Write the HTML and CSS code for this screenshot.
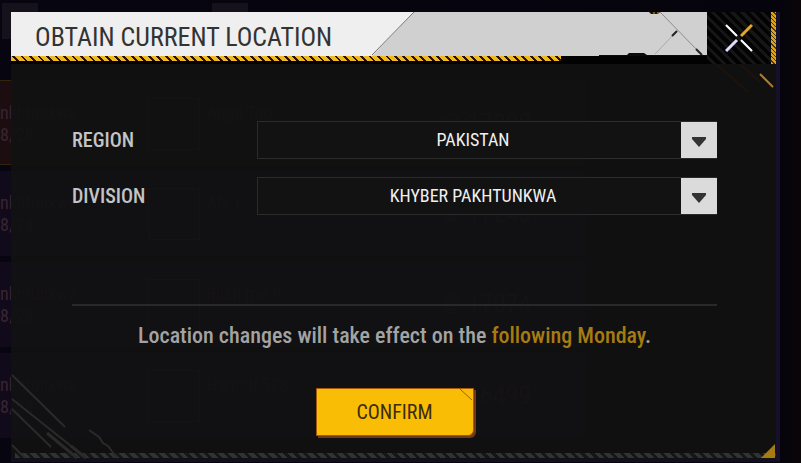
FILE: index.html
```html
<!DOCTYPE html>
<html lang="en">
<head>
    <meta charset="UTF-8">
    <meta name="viewport" content="width=device-width, initial-scale=1.0">
    <title>Obtain Current Location</title>
    <link rel="stylesheet" href="styles.css">
</head>
<body>
    <!-- dimmed leaderboard behind the dialog -->
    <div class="board" aria-hidden="true">
        <div class="tabs"><i></i><i></i></div>
        <div class="row row-first">
            <div class="place"><span>nkhtunkwa</span><span>8/28</span></div>
            <div class="avatar"></div>
            <div class="player">Ange Tng</div>
            <div class="score">&#9819; 17290</div>
        </div>
        <div class="row">
            <div class="place"><span>nkhtunkwa</span><span>8/28</span></div>
            <div class="avatar"></div>
            <div class="player">Afk F</div>
            <div class="score">&#9819; 17240</div>
        </div>
        <div class="row">
            <div class="place"><span>nkhtunkwa</span><span>8/28</span></div>
            <div class="avatar"></div>
            <div class="player">Rush me P</div>
            <div class="score">&#9819; 17074</div>
        </div>
        <div class="row">
            <div class="place"><span>nkhtunkwa</span><span>8/28</span></div>
            <div class="avatar"></div>
            <div class="player">Hamid6528</div>
            <div class="score">&#9819; 16499</div>
        </div>
    </div>

    <form class="dialog" role="dialog" aria-labelledby="title">
        <header class="header">
            <div class="banner">
                <div class="title-bar">
                    <h1 id="title">OBTAIN CURRENT LOCATION</h1>
                    <svg class="slant" width="44" height="44" viewBox="0 0 44 44">
                        <path d="M0 0H43L1 44H0z" fill="#efefef"/>
                        <path d="M43 0L1 43" stroke="#777" fill="none"/>
                    </svg>
                    <svg class="lines" width="150" height="44" viewBox="0 0 150 44">
                        <path d="M103 0L144 42" stroke="#8b8b8b" fill="none"/>
                        <path d="M98 42L121 18" stroke="#a9a9a9" fill="none"/>
                        <path d="M115 24L120 19M139 37L145 43" stroke="#222" stroke-width="2" fill="none"/>
                        <path d="M92 0h11l-2 2h-7z" fill="#1c1503"/>
                        <path d="M96 1h2M100 1h2" stroke="#caa017"/>
                        <path d="M42 43h28l2-2h15l3 2h60v1H42z" fill="#0b0b0b"/>
                    </svg>
                </div>
                <div class="tape"></div>
            </div>
            <button class="close" type="button" aria-label="Close">
                <svg width="28" height="28" viewBox="0 0 28 28" fill="none" stroke-width="2">
                    <path d="M1 1L12 12M16 16L27 27" stroke="#fff"/>
                    <path d="M27 1L16 12" stroke="#e2a72b" stroke-width="3"/>
                    <path d="M1 27L12 16" stroke="#e3dcff" stroke-width="3"/>
                </svg>
            </button>
        </header>

        <svg class="scratch-top" width="90" height="34" viewBox="0 0 90 34" fill="none">
            <path d="M30 0L62 28M54 0L74 18" stroke="#2a1408" stroke-width="2" opacity=".5"/>
            <path d="M74 10L87 23" stroke="#b27a28" stroke-width="2"/>
        </svg>
        <svg class="scratch-bottom" width="110" height="86" viewBox="0 0 110 86" fill="none" stroke="#2a2a2a" stroke-width="2">
            <path d="M1 2L54 54M1 26L75 85M1 36L40 74M1 72L14 85"/>
            <path d="M36 60L66 85M60 73L75 85" stroke-width="3"/>
            <path d="M78 57L88 64L92 70L97 73L106 85"/>
        </svg>

        <div class="body">
            <div class="field">
                <label for="region">REGION</label>
                <div class="picker">
                    <select id="region">
                        <option>PAKISTAN</option>
                    </select>
                    <span class="arrow"><svg width="14" height="10" viewBox="0 0 14 10"><path d="M0 0H14V2L7 10L0 2z" fill="#333"/></svg></span>
                </div>
            </div>
            <div class="field">
                <label for="division">DIVISION</label>
                <div class="picker">
                    <select id="division">
                        <option>KHYBER PAKHTUNKWA</option>
                    </select>
                    <span class="arrow"><svg width="14" height="10" viewBox="0 0 14 10"><path d="M0 0H14V2L7 10L0 2z" fill="#333"/></svg></span>
                </div>
            </div>
            <hr>
            <p class="note">Location changes will take effect on the <em>following Monday</em>.</p>
            <button class="confirm" type="submit">
                CONFIRM
                <svg width="14" height="12" viewBox="0 0 14 12"><path d="M1 0L13 11" stroke="#a35a08" fill="none"/></svg>
            </button>
        </div>
        <div class="footer-tape"></div>
    </form>
</body>
</html>
```
FILE: styles.css
```css
* {
    box-sizing: border-box;
}

body {
    margin: 0;
    min-height: 100vh;
    display: grid;
    overflow: hidden;
    background: linear-gradient(90deg, #07050f 0, #05030c 97%, #0a0507 100%);
    font-family: "Roboto Condensed", "Liberation Sans Narrow", "Liberation Sans", sans-serif;
}

/* both layers share the single grid cell */
.board,
.dialog {
    grid-area: 1 / 1;
    min-width: 0;
}

.board {
    color: #3a2430;
    font-size: 18px;
    line-height: 22px;
}

.tabs {
    display: flex;
    gap: 174px;
    height: 80px;
    padding: 3px 2px;
}

.tabs i {
    width: 36px;
    height: 36px;
    background: #15121c;
}

.row {
    display: grid;
    grid-template-columns: 148px 52px 230px 1fr;
    height: 85px;
    width: 586px;
    margin-bottom: 6px;
    padding-top: 17px;
    background: #100a1b;
}

.row-first {
    background: #1b0d10;
    border-top: 1px solid #33240c;
    border-bottom: 1px solid #33240c;
}

.place {
    display: flex;
    flex-direction: column;
    padding-top: 4px;
}

.avatar {
    height: 52px;
    border: 1px solid #333;
}

.player {
    padding: 4px 6px;
}

.score {
    padding: 14px 8px;
    font-size: 26px;
}

.dialog {
    position: relative;
    display: flex;
    flex-direction: column;
    margin: 12px 21px 1px 11px;
    border-right: 4px solid #16102a;
    border-bottom: 3px solid #150d22;
    background: rgba(17, 17, 17, 0.92);
}

.header {
    display: flex;
    height: 52px;
    background: #020202;
}

.banner {
    flex: 1;
    min-width: 0;
}

.title-bar {
    display: flex;
    height: 44px;
    background: #d0d0d0;
}

h1 {
    margin: 0;
    width: 360px;
    padding-left: 24px;
    background: #efefef;
    color: #333;
    font-size: 26px;
    font-weight: 400;
    line-height: 50px;
    white-space: nowrap;
}

.lines {
    margin-left: auto;
}

.tape {
    width: 79%;
    height: 5px;
    background: repeating-linear-gradient(45deg, #efb920 0 4px, #2b1205 4px 6px);
}

.close {
    display: grid;
    place-items: center;
    width: 69px;
    padding: 0;
    border: 0;
    background: repeating-linear-gradient(45deg, #dba41e 0 2px, #4b3208 2px 3px) right / 5px 100% no-repeat,
        repeating-linear-gradient(45deg, #030303 0 4px, #161616 4px 7px);
    cursor: pointer;
}

.close svg {
    margin-right: 5px;
}

.scratch-top {
    position: absolute;
    top: 52px;
    right: 0;
}

.scratch-bottom {
    position: absolute;
    left: 0;
    bottom: 0;
}

.body {
    flex: 1;
    display: flex;
    flex-direction: column;
    padding: 57px 59px 0 61px;
}

.field {
    display: grid;
    grid-template-columns: 185px 1fr;
    align-items: center;
    height: 38px;
    margin-bottom: 18px;
}

label {
    color: #c4c4c4;
    font-size: 20px;
    font-weight: 500;
}

.picker {
    position: relative;
    display: flex;
    height: 38px;
}

select {
    appearance: none;
    width: 100%;
    padding: 0 28px 0 0;
    border: 1px solid #2b2b2b;
    border-radius: 0;
    background: #121212;
    color: #f0f0f0;
    font: 18px/36px "Roboto Condensed", "Liberation Sans Narrow", "Liberation Sans", sans-serif;
    text-align: center;
    text-align-last: center;
}

.arrow {
    position: absolute;
    top: 1px;
    right: 0;
    bottom: 1px;
    display: grid;
    place-items: center;
    width: 36px;
    padding-top: 4px;
    background: #dbdbdb;
    pointer-events: none;
}

hr {
    width: 100%;
    height: 2px;
    margin: 71px 0 0;
    border: 0;
    background: #292929;
}

.note {
    margin: 14px 0 0;
    color: #a3a3a3;
    font-size: 22px;
    font-weight: 500;
    line-height: 32px;
    text-align: center;
    white-space: nowrap;
}

.note em {
    color: #a67c12;
    font-style: normal;
}

.confirm {
    position: relative;
    align-self: center;
    width: 158px;
    height: 48px;
    margin-top: 36px;
    padding: 0;
    border: 1px solid #a35a08;
    border-radius: 0 0 6px 0;
    background: #f9bd06;
    box-shadow: 2px 2px 0 #743718;
    color: #3b2c06;
    font: 20px "Roboto Condensed", "Liberation Sans Narrow", "Liberation Sans", sans-serif;
    cursor: pointer;
}

.confirm svg {
    position: absolute;
    top: 0;
    right: 0;
}

.footer-tape {
    height: 5px;
    margin: auto 0 1px 4px;
    background: repeating-linear-gradient(45deg, #303333 0 4px, #151616 4px 7px);
}

/* gold corner */
.footer-tape::after {
    content: "";
    position: absolute;
    right: 1px;
    bottom: 1px;
    border-left: 14px solid transparent;
    border-bottom: 14px solid #a67c12;
}
```
